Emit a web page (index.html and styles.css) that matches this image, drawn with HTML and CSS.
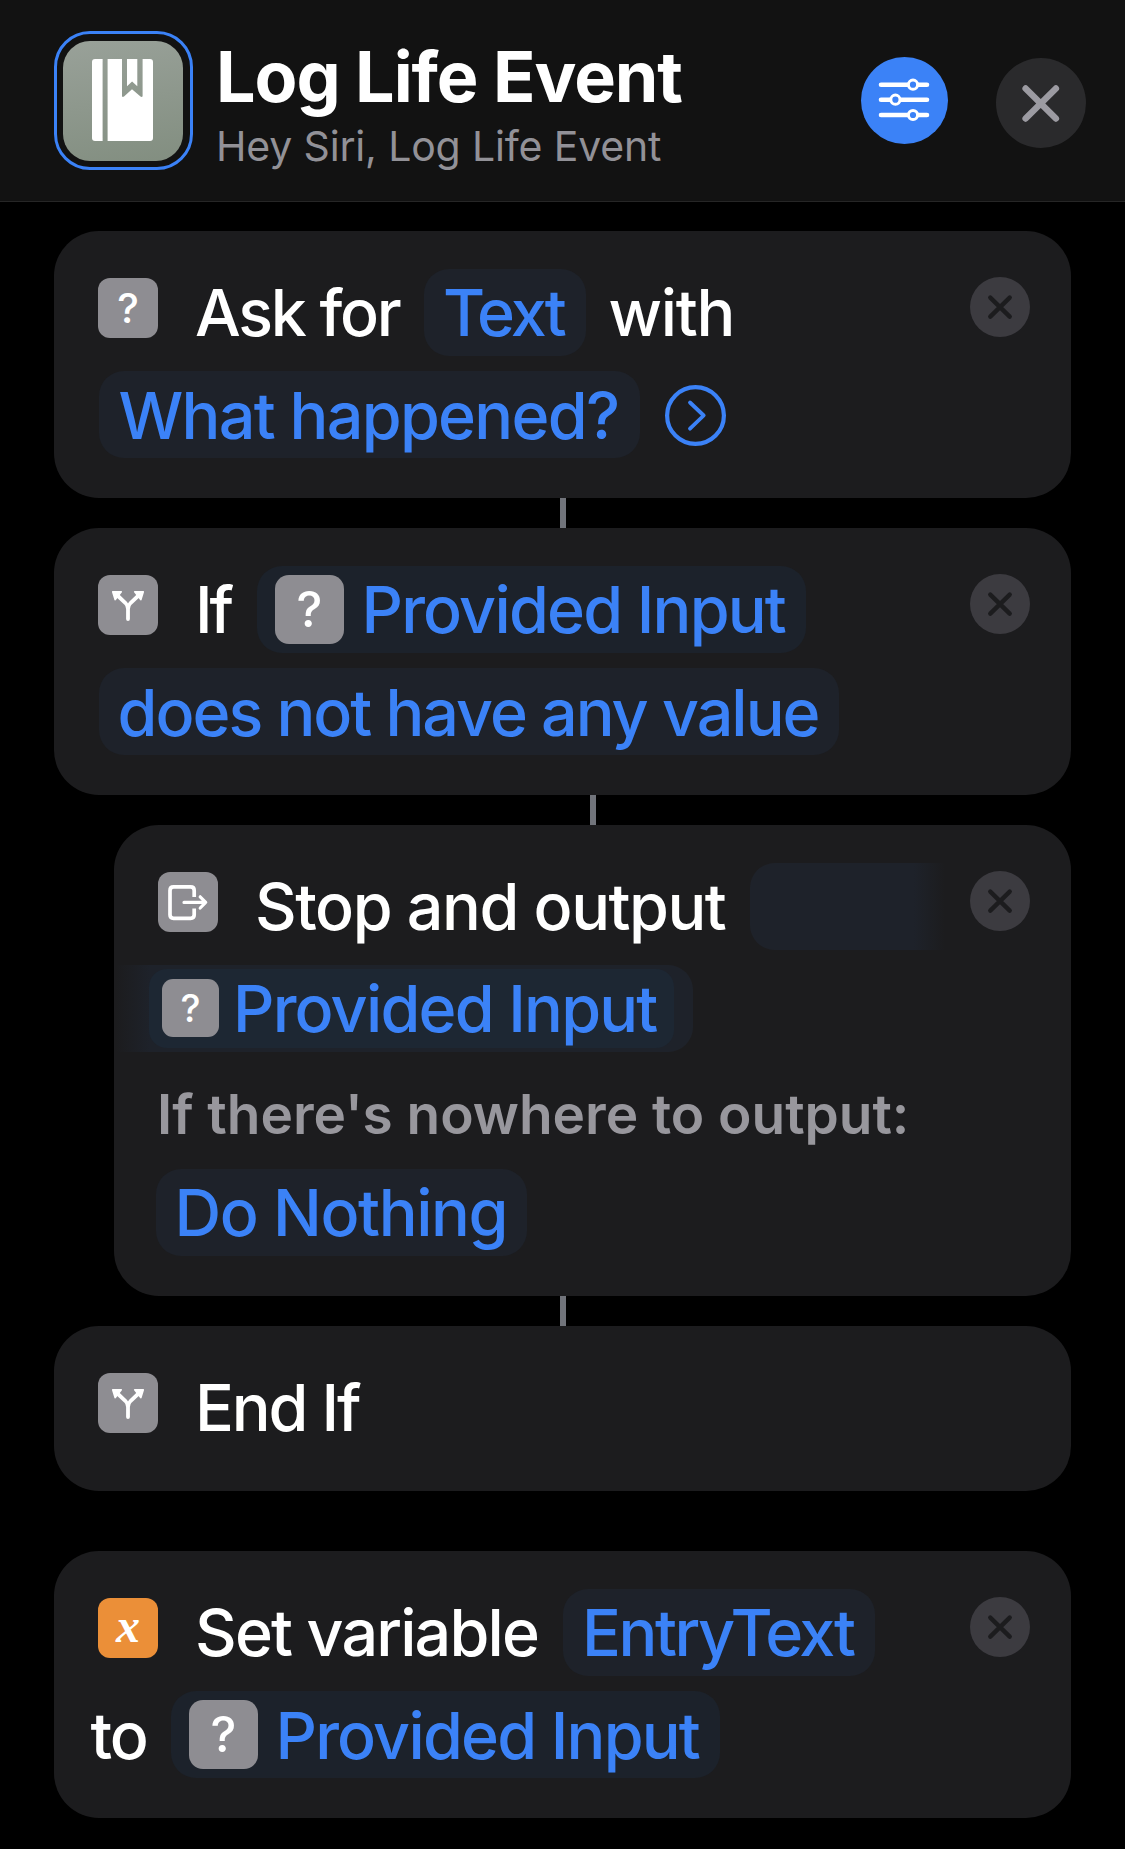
FILE: index.html
```html
<!DOCTYPE html>
<html lang="en">
<head>
<meta charset="utf-8">
<title>Log Life Event</title>
<link rel="stylesheet" href="styles.css">
</head>
<body>
<svg class="defs" width="0" height="0" aria-hidden="true">
  <symbol id="close" viewBox="0 0 60 60"><path d="M20.3 20.6 39.7 39.6M39.7 20.6 20.3 39.6" fill="none" stroke="#1c1c1e" stroke-width="4.4" stroke-linecap="round"/></symbol>
  <symbol id="branch" viewBox="0 0 60 60">
    <path d="M30 44V34Q30 30.5 27.5 28L20 21M30 34Q30 30.5 32.500 28L40 21" fill="none" stroke="#fff" stroke-width="3.8" stroke-linecap="round"/>
    <path d="M14.800 16.800 23.200 16.800 17.200 24.500ZM45.200 16.800 36.800 16.800 42.800 24.500Z" fill="#fff" stroke="#fff" stroke-width="1.800" stroke-linejoin="round"/>
  </symbol>
</svg>

<header class="header">
  <div class="app-ring">
    <div class="app-icon">
      <svg width="120" height="120" viewBox="0 0 120 120">
        <path fill="#fff" d="M32 18H39.600V100H32Q29 100 29 97V21Q29 18 32 18Z"/>
        <path fill="#fff" d="M44.600 18H59V55Q59.300 56.600 61 55.600L69 48.200 77.500 55.600Q79.300 56.600 79.600 55V18H87Q90 18 90 21V97Q90 100 87 100H44.600Z"/>
        <path fill="#fff" d="M64 18H74.300V45.300L69.100 40.400 64 45.300Z"/>
      </svg>
    </div>
  </div>
  <div class="titles">
    <h1 class="title">Log Life Event</h1>
    <p class="subtitle">Hey Siri, Log Life Event</p>
  </div>
  <div class="btn-settings">
    <svg width="87" height="87" viewBox="0 0 87 87" fill="none" stroke="#fff">
      <path d="M20 27.700H66M20 42.700H66M20 58H66" stroke-width="4.600" stroke-linecap="round"/>
      <g fill="#3b82f7" stroke-width="3"><circle cx="52" cy="27.700" r="4.600"/><circle cx="34.400" cy="42.700" r="4.600"/><circle cx="52" cy="58" r="4.600"/></g>
    </svg>
  </div>
  <div class="btn-close">
    <svg width="90" height="90" viewBox="0 0 90 90"><path d="M29.600 30.400 59.900 60.500M59.900 30.400 29.600 60.500" stroke="#9c9ba2" stroke-width="6.400" stroke-linecap="round"/></svg>
  </div>
</header>

<main class="actions">
  <section class="card">
    <div class="row">
      <span class="icon">?</span>
      <span class="word w-ask">Ask for</span>
      <span class="chip c-text">Text</span>
      <span class="word w-with">with</span>
      <span class="delete"><svg width="60" height="60"><use href="#close"/></svg></span>
    </div>
    <div class="row">
      <span class="chip c-what">What happened?</span>
      <svg class="more" width="61" height="61" viewBox="0 0 61 61" fill="none" stroke="#3b82f7" stroke-linecap="round" stroke-linejoin="round"><circle cx="30.500" cy="30.500" r="28.400" stroke-width="4.200"/><path d="M25 17.500 38.700 30.500 25 43.700" stroke-width="3.800"/></svg>
    </div>
  </section>
  <div class="link"></div>
  <section class="card">
    <div class="row">
      <span class="icon"><svg width="60" height="60"><use href="#branch"/></svg></span>
      <span class="word w-if">If</span>
      <span class="chip variable"><span class="icon large">?</span><span>Provided Input</span></span>
      <span class="delete"><svg width="60" height="60"><use href="#close"/></svg></span>
    </div>
    <div class="row">
      <span class="chip c-does">does not have any value</span>
    </div>
  </section>
  <div class="link nested"></div>
  <section class="card nested">
    <div class="row">
      <span class="icon"><svg width="60" height="60" viewBox="0 0 60 60" fill="none" stroke="#fff" stroke-linecap="round" stroke-linejoin="round"><path d="M36.200 25V18.500Q36.200 14.900 32.600 14.900H15.600Q12 14.900 12 18.500V42.700Q12 46.300 15.600 46.300H32.600Q36.200 46.300 36.200 42.700V36.500" stroke-width="3.700" stroke-linecap="butt"/><path d="M26 30.400H47.500M42.200 24.800 47.700 30.400 42.200 36" stroke-width="3.200"/></svg></span>
      <span class="word w-stop">Stop and output</span>
      <span class="chip fade-end"></span>
      <span class="delete"><svg width="60" height="60"><use href="#close"/></svg></span>
    </div>
    <div class="row">
      <span class="chip fade-start"><span class="token"><span class="icon small">?</span><span>Provided Input</span></span></span>
    </div>
    <p class="note">If there's nowhere to output:</p>
    <div class="row">
      <span class="chip c-nothing">Do Nothing</span>
    </div>
  </section>
  <div class="link"></div>
  <section class="card">
    <div class="row">
      <span class="icon"><svg width="60" height="60"><use href="#branch"/></svg></span>
      <span class="word w-end">End If</span>
    </div>
  </section>
  <section class="card separate">
    <div class="row">
      <span class="icon orange">x</span>
      <span class="word w-set">Set variable</span>
      <span class="chip c-entry">EntryText</span>
      <span class="delete"><svg width="60" height="60"><use href="#close"/></svg></span>
    </div>
    <div class="row">
      <span class="word w-to">to</span>
      <span class="chip variable"><span class="icon large">?</span><span class="lowered">Provided Input</span></span>
    </div>
  </section>
</main>
</body>
</html>
```
FILE: styles.css
```css
* { box-sizing: border-box; }
body {
  margin: 0;
  background: #000;
  color: #fff;
  font-family: Inter, "Liberation Sans", sans-serif;
}
h1, p { margin: 0; }
svg { display: block; flex: none; }
.defs { position: absolute; }

.header {
  display: flex;
  align-items: flex-start;
  height: 202px;
  padding: 31px 39px 0 54px;
  background: #121212;
  border-bottom: 1px solid #262626;
}
.app-ring {
  flex: none;
  width: 139px;
  height: 139px;
  padding: 7px 6px;
  border: 3px solid #3b82f7;
  border-radius: 36px;
}
.app-icon {
  width: 120px;
  height: 120px;
  border-radius: 27px;
  background: linear-gradient(170deg, #99a199, #828e80);
}
.titles {
  flex: 1;
  padding-left: 23px;
  white-space: nowrap;
}
.title {
  padding-top: 1px;
  font-size: 70px;
  font-weight: 700;
  line-height: 90px;
  letter-spacing: -1.05px;
}
.subtitle {
  margin-top: -1px;
  font-size: 41px;
  line-height: 50px;
  letter-spacing: -0.16px;
  color: #929197;
}
.btn-settings {
  width: 87px;
  height: 87px;
  margin-top: 26px;
  border-radius: 50%;
  background: #3b82f7;
}
.btn-close {
  width: 90px;
  height: 90px;
  margin: 27px 0 0 48px;
  border-radius: 50%;
  background: #2a2a2c;
}

.actions { padding: 29px 54px 31px; }
.card {
  display: flex;
  flex-direction: column;
  gap: 15px;
  padding: 38px 41px 40px 44px;
  border-radius: 45px;
  background: #1c1c1e;
}
.card.nested { margin-left: 60px; }
.card.separate { margin-top: 60px; }
.link {
  width: 6px;
  height: 30px;
  margin-left: 506px;
  background: #71747b;
}
.link.nested { margin-left: 536px; }

.row {
  display: flex;
  align-items: center;
  height: 87px;
  font-size: 64.6px;
  font-weight: 500;
  line-height: 87px;
  white-space: nowrap;
}
.word { flex: none; }
.icon {
  display: flex;
  flex: none;
  align-items: center;
  justify-content: center;
  width: 60px;
  height: 60px;
  margin: 0 37px 9px 0;
  border-radius: 12px;
  background: #8e8d92;
  color: #fff;
  font-size: 41px;
  line-height: 60px;
  letter-spacing: 0;
}
.icon.large {
  width: 69px;
  height: 69px;
  margin: 0 17.5px 0 0;
  border-radius: 14px;
  font-size: 49px;
}
.icon.small {
  width: 57px;
  height: 58px;
  margin: 0 14px 1px 0;
  border-radius: 11px;
  font-size: 38px;
}
.icon.orange {
  padding-bottom: 5px;
  background: #eb8f38;
  font: italic bold 48px/60px "Liberation Serif", serif;
}
.delete {
  flex: none;
  width: 60px;
  height: 60px;
  margin: 0 0 11px auto;
  border-radius: 50%;
  background: #3c3b40;
}
.more { margin: 2px 0 0 25px; }

.chip {
  display: flex;
  flex: none;
  align-items: center;
  height: 87px;
  padding-left: 18.5px;
  border-radius: 25px;
  background: #1e222a;
  color: #3b82f7;
}
.chip.variable {
  width: 549px;
  background: #1c222b;
  letter-spacing: -1.79px;
}
.chip.fade-end {
  width: 195px;
  border-radius: 25px 0 0 25px;
  background: linear-gradient(90deg, #1e222a 84%, #1c1c1e);
}
.chip.fade-start {
  width: 577px;
  margin-left: -42px;
  padding-left: 33px;
  border-radius: 0 25px 25px 0;
  background: linear-gradient(90deg, #1c1c1e, #1e222a 34px);
}
.token {
  display: flex;
  align-items: center;
  width: 525px;
  height: 79px;
  padding-left: 13px;
  border-radius: 18px;
  background: #1d2733;
  letter-spacing: -1.79px;
}
.lowered { padding-top: 2px; }
.note {
  height: 87px;
  margin-left: -1px;
  font-size: 55px;
  font-weight: 600;
  line-height: 95px;
  letter-spacing: -0.04px;
  white-space: nowrap;
  color: #98979d;
}

.w-ask { width: 228.5px; letter-spacing: -2.3px; }
.c-text { width: 162px; padding-left: 19.5px; letter-spacing: -3px; }
.w-with { margin-left: 23px; letter-spacing: -1.3px; }
.c-what { width: 540.5px; margin-left: 1px; padding: 1px 0 0 19.5px; letter-spacing: -1.7px; }
.w-if { width: 61.5px; letter-spacing: -3px; }
.c-does { width: 740px; margin-left: 1px; padding-top: 1px; letter-spacing: -2px; }
.w-stop { width: 495px; letter-spacing: -1.48px; }
.c-nothing { width: 371px; margin-left: -2px; letter-spacing: -1.42px; }
.w-end { letter-spacing: -2.1px; }
.w-set { width: 368px; letter-spacing: -1.84px; }
.c-entry { width: 312px; padding-left: 19px; letter-spacing: -2.45px; }
.w-to { width: 80px; margin-left: -7.5px; padding-top: 2px; letter-spacing: -2px; }
```
